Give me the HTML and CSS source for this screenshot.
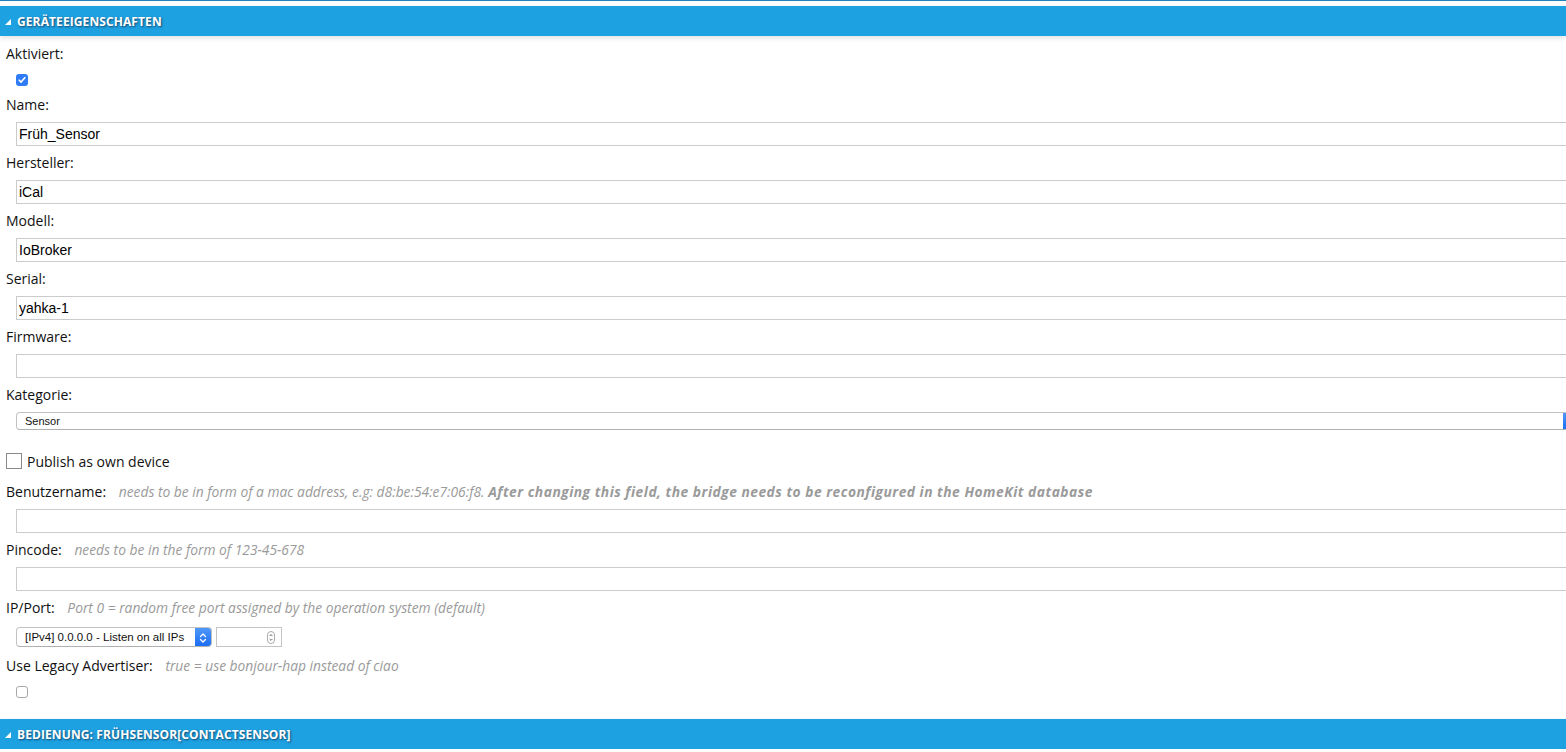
FILE: index.html
```html
<!DOCTYPE html>
<html lang="de">

<head>
    <meta charset="UTF-8">
    <meta name="viewport" content="width=device-width, initial-scale=1.0">
    <title>Geräteeigenschaften</title>
    <link rel="stylesheet" href="styles.css">
</head>

<body>
    <div class="top-line"></div>

    <header class="section-head">
        <svg class="tri" width="6" height="6" viewBox="0 0 6 6"><polygon points="6,0 6,6 0,6" fill="#fff"/></svg>
        <span>Geräteeigenschaften</span>
    </header>

    <section class="form">
        <div class="label">Aktiviert:</div>
        <div class="check-row">
            <span class="cb cb-checked">
                <svg width="12" height="12" viewBox="0 0 12 12"><path d="M3.2 6.2l1.9 1.9 3.7-4.4" fill="none" stroke="#fff" stroke-width="1.6" stroke-linecap="round" stroke-linejoin="round"/></svg>
            </span>
        </div>

        <div class="label">Name:</div>
        <div class="text-input">Früh_Sensor</div>

        <div class="label">Hersteller:</div>
        <div class="text-input">iCal</div>

        <div class="label">Modell:</div>
        <div class="text-input">IoBroker</div>

        <div class="label">Serial:</div>
        <div class="text-input">yahka-1</div>

        <div class="label">Firmware:</div>
        <div class="text-input"></div>

        <div class="label">Kategorie:</div>
        <div class="select select-wide">
            <span class="select-text">Sensor</span>
            <span class="select-arrow"></span>
        </div>

        <label class="publish">
            <span class="cb-big"></span>
            <span>Publish as own device</span>
        </label>

        <div class="label">Benutzername: <span class="hint">needs to be in form of a mac address, e.g: d8:be:54:e7:06:f8. <b>After changing this field, the bridge needs to be reconfigured in the HomeKit database</b></span></div>
        <div class="text-input"></div>

        <div class="label">Pincode: <span class="hint">needs to be in the form of 123-45-678</span></div>
        <div class="text-input"></div>

        <div class="label">IP/Port: <span class="hint">Port 0 = random free port assigned by the operation system (default)</span></div>
        <div class="ip-row">
            <div class="select select-ip">
                <span class="select-text">[IPv4] 0.0.0.0 - Listen on all IPs</span>
                <span class="select-arrow">
                    <svg width="16" height="20" viewBox="0 0 16 20"><path d="M5.5 8.5l2.5-2.5 2.5 2.5M5.5 11.5l2.5 2.5 2.5-2.5" fill="none" stroke="#fff" stroke-width="1.3" stroke-linecap="round" stroke-linejoin="round"/></svg>
                </span>
            </div>
            <div class="num-input">
                <span class="spinner">
                    <svg width="8" height="13" viewBox="0 0 8 13"><rect x="0.5" y="0.5" width="7" height="12" rx="3.5" fill="#fff" stroke="#aaa"/><path d="M2.6 5l1.4-1.4 1.4 1.4M2.6 8l1.4 1.4 1.4-1.4" fill="none" stroke="#555" stroke-width="0.9"/></svg>
                </span>
            </div>
        </div>

        <div class="label">Use Legacy Advertiser: <span class="hint">true = use bonjour-hap instead of ciao</span></div>
        <div class="check-row check-last">
            <span class="cb"></span>
        </div>
    </section>

    <header class="section-head">
        <svg class="tri" width="6" height="6" viewBox="0 0 6 6"><polygon points="6,0 6,6 0,6" fill="#fff"/></svg>
        <span>Bedienung: Frühsensor[ContactSensor]</span>
    </header>
</body>

</html>
```

FILE: styles.css
```css
* {
    box-sizing: border-box;
}

html, body {
    margin: 0;
    background: #fff;
    overflow: hidden;
}

body {
    font-family: 'Open Sans', 'Liberation Sans', sans-serif;
    font-size: 14px;
    color: #111;
}

.top-line {
    height: 1px;
    background: #1d7fbe;
    margin-bottom: 5px;
}

.section-head {
    height: 30px;
    background: #1ea1e1;
    display: flex;
    align-items: center;
    padding-left: 5px;
    color: #fff;
    font-size: 12px;
    font-weight: 700;
    letter-spacing: 0.1px;
    text-transform: uppercase;
    text-shadow: 1px 1px 2px rgba(20, 40, 70, 0.75);
    box-shadow: 0 2px 5px rgba(0, 0, 0, 0.12);
    position: relative;
}

.section-head .tri {
    margin: 2px 6px 0 0;
}

.form {
    padding: 8px 0 21px 6px;
}

.label {
    height: 20px;
    line-height: 20px;
    white-space: nowrap;
}

.hint {
    margin-left: 9px;
    font-size: 13.8px;
    font-style: italic;
    color: #9a9a9a;
}

.hint b {
    font-weight: 700;
    letter-spacing: 0.5px;
}

.check-row {
    height: 31px;
    padding: 10px 0 0 10px;
}

.check-last {
    height: 22px;
}

.cb {
    display: block;
    width: 12px;
    height: 12px;
    border: 1px solid #a8a8a8;
    border-radius: 3px;
    background: #fff;
}

.cb-checked {
    border: none;
    background: #2f7cf6;
}

.cb-checked svg {
    display: block;
}

.text-input {
    margin: 7px 0 7px 10px;
    width: 100%;
    height: 24px;
    border: 1px solid #cbcbcb;
    padding-left: 2px;
    font-family: 'Liberation Sans', Arial, sans-serif;
    font-size: 14px;
    line-height: 22px;
    color: #000;
}

.select {
    display: flex;
    align-items: center;
    border: 1px solid #c2c2c2;
    border-bottom-color: #b0b0b0;
    border-radius: 4px;
    background: #fff;
    font-family: 'Liberation Sans', Arial, sans-serif;
    font-size: 11px;
    color: #111;
    overflow: hidden;
}

.select-text {
    flex: 1;
    padding-left: 8px;
    white-space: nowrap;
}

.select-ip .select-text {
    font-size: 11.5px;
}

.select-arrow {
    align-self: stretch;
    width: 16px;
    background: linear-gradient(#4f97f8, #1c6ef3);
}

.select-arrow svg {
    display: block;
}

.select-wide {
    margin: 7px 0 0 10px;
    width: calc(100% + 4px);
    height: 18px;
}

.publish {
    display: flex;
    align-items: center;
    gap: 5px;
    margin-top: 21px;
    height: 20px;
    margin-bottom: 11px;
}

.cb-big {
    width: 16px;
    height: 16px;
    border: 1px solid #8a8a8a;
    background: #fff;
}

.ip-row {
    display: flex;
    gap: 4px;
    margin: 9px 0 9px 10px;
}

.select-ip {
    width: 196px;
    height: 20px;
}

.num-input {
    width: 66px;
    height: 20px;
    border: 1px solid #c4c4c4;
    display: flex;
    align-items: center;
    justify-content: flex-end;
    padding-right: 6px;
}

.spinner svg {
    display: block;
}
```
